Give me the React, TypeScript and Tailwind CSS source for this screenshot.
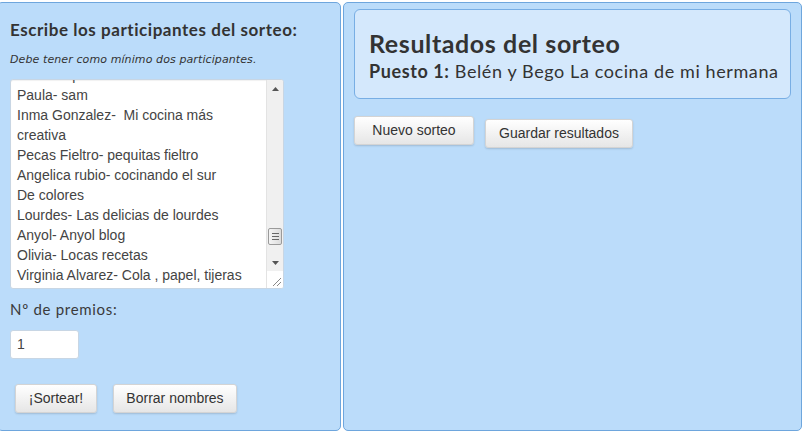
import React from "react";

const names = [
  "Mamen- pastelitos",
  "Paula- sam",
  "Inma Gonzalez-  Mi cocina más",
  "creativa",
  "Pecas Fieltro- pequitas fieltro",
  "Angelica rubio- cocinando el sur",
  "De colores",
  "Lourdes- Las delicias de lourdes",
  "Anyol- Anyol blog",
  "Olivia- Locas recetas",
  "Virginia Alvarez- Cola , papel, tijeras",
];

const btn =
  "h-[29px] px-[12px] rounded-[3px] border border-[#d4d4d4] bg-gradient-to-b from-white to-[#e6e6e6] shadow-[0_1px_2px_rgba(0,0,0,0.15)] text-[14px] text-[#333] font-['Liberation_Sans',Arial,sans-serif]";

const FakeScrollbar = () => (
  <div className="w-[17px] flex flex-col bg-[#f0f0f0] border-l border-[#e3e3e3]">
    <div className="h-[17px] flex items-center justify-center">
      <svg width="7" height="4" viewBox="0 0 7 4">
        <path d="M0 4 L3.5 0 L7 4 Z" fill="#555" />
      </svg>
    </div>
    <div className="flex-1 relative">
      <div className="absolute left-[1px] right-[1px] top-[131px] h-[17px] rounded-[2px] border border-[#9a9a9a] bg-gradient-to-r from-[#f4f4f4] to-[#dcdcdc] flex flex-col items-center justify-center gap-[2px]">
        <div className="w-[7px] h-[1px] bg-[#666]" />
        <div className="w-[7px] h-[1px] bg-[#666]" />
        <div className="w-[7px] h-[1px] bg-[#666]" />
      </div>
    </div>
    <div className="h-[17px] flex items-center justify-center">
      <svg width="7" height="4" viewBox="0 0 7 4">
        <path d="M0 0 L3.5 4 L7 0 Z" fill="#555" />
      </svg>
    </div>
    <div className="h-[17px] bg-white flex items-end justify-end p-[2px]">
      <svg width="9" height="9" viewBox="0 0 9 9">
        <path d="M9 1 L1 9 M9 5 L5 9" stroke="#888" strokeWidth="1" />
      </svg>
    </div>
  </div>
);

export default function App() {
  return (
    <div className="w-[804px] h-[433px] bg-white overflow-hidden flex gap-[2px] pt-[2px] text-[#333]">
      {/* Left panel */}
      <div className="w-[344px] h-[429px] -ml-[3px] shrink-0 rounded-[5px] border border-[#6ea6dd] bg-[#bbdcfa] pl-[12px] pt-[14px]">
        <h2 className="font-['Lato',sans-serif] font-bold text-[17px] leading-[26px] tracking-[0.55px] text-[#333]">
          Escribe los participantes del sorteo:
        </h2>
        <p className="mt-[10px] font-['DejaVu_Sans',sans-serif] italic text-[11px] leading-[14px] tracking-[0.1px] text-[#333]">
          Debe tener como mínimo dos participantes.
        </p>
        <div className="mt-[12px] w-[274px] h-[210px] rounded-[3px] border border-[#c8d6e4] bg-white flex overflow-hidden shadow-[inset_0_1px_1px_rgba(0,0,0,0.06)]">
          <div className="flex-1 overflow-hidden pl-[6px]">
            <div className="-mt-[15px] font-['Liberation_Sans',Arial,sans-serif] text-[14px] leading-[20px] text-[#444]">
              {names.map((n) => (
                <div key={n} className="whitespace-pre">
                  {n}
                </div>
              ))}
            </div>
          </div>
          <FakeScrollbar />
        </div>
        <p className="mt-[10px] font-['Lato',sans-serif] text-[15px] leading-[20px] tracking-[0.7px] text-[#3a3a3a]">
          Nº de premios:
        </p>
        <div className="mt-[11px] w-[69px] h-[29px] rounded-[3px] border border-[#c8d6e4] bg-white pl-[6px] flex items-center font-['Liberation_Sans',Arial,sans-serif] text-[14px] text-[#444]">
          1
        </div>
        <div className="mt-[25px] ml-[5px] flex gap-[16px]">
          <button className={btn + " w-[82px]"}>¡Sortear!</button>
          <button className={btn + " w-[124px]"}>Borrar nombres</button>
        </div>
      </div>

      {/* Right panel */}
      <div className="w-[459px] h-[429px] shrink-0 rounded-[5px] border border-[#6ea6dd] bg-[#bbdcfa] pl-[10px] pr-[10px] pt-[6px]">
        <div className="h-[90px] rounded-[6px] border border-[#78aee4] bg-[#d4e8fc] pl-[14px] pt-[18px]">
          <h1 className="font-['Lato',sans-serif] font-bold text-[25px] leading-[30px] tracking-[0.6px] text-[#333]">
            Resultados del sorteo
          </h1>
          <p className="mt-[1px] font-['Lato',sans-serif] text-[18px] leading-[24px] tracking-[0.6px] text-[#333]">
            <span className="font-bold">Puesto 1:</span> Belén y Bego La cocina de mi hermana
          </p>
        </div>
        <div className="mt-[17px] flex items-start gap-[11px]">
          <button className={btn + " w-[120px]"}>Nuevo sorteo</button>
          <button className={btn + " w-[148px] mt-[3px]"}>Guardar resultados</button>
        </div>
      </div>
    </div>
  );
}
